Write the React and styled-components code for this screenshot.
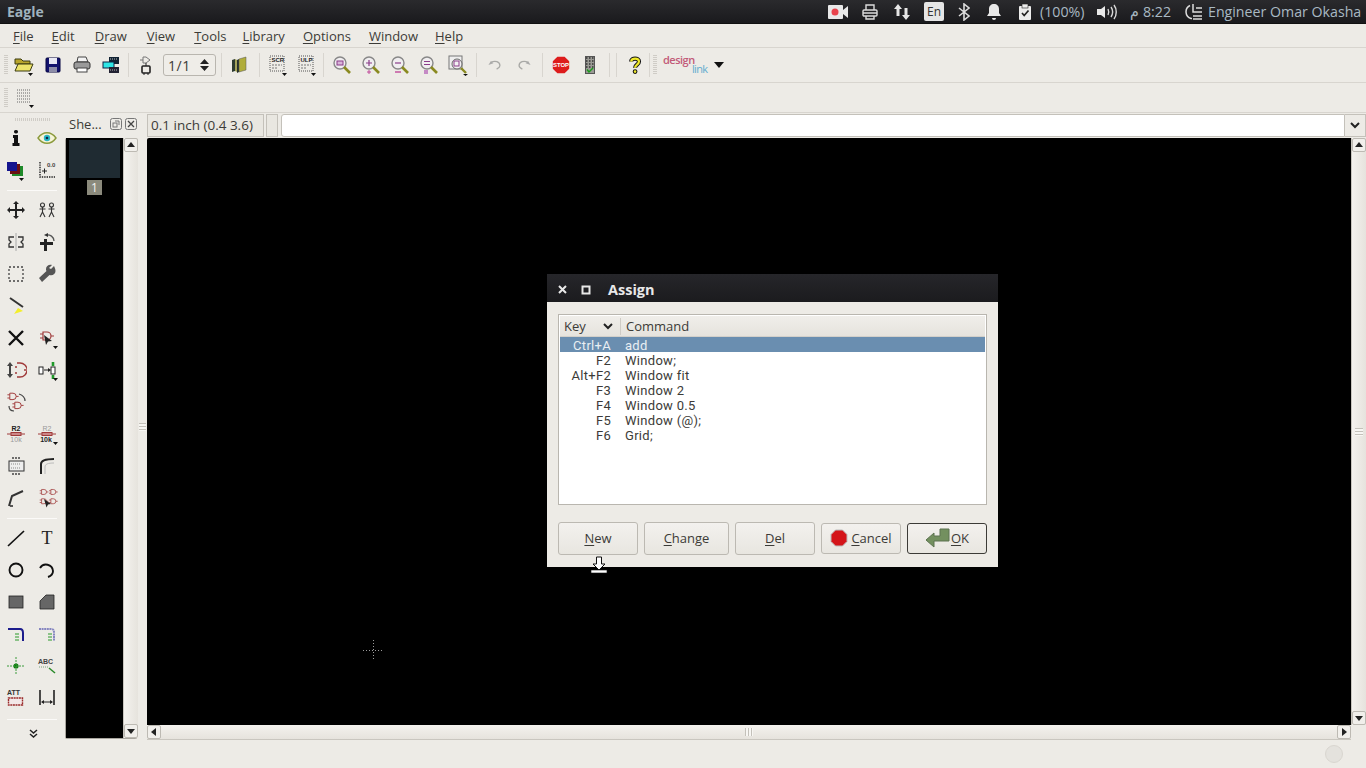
import React from "react";
import styled, { createGlobalStyle } from "styled-components";

const Global = createGlobalStyle`
  html, body { margin: 0; padding: 0; background: #edebe6; }
  body { font-family: "Open Sans", "Noto Sans", "DejaVu Sans", sans-serif; color: #3c3b37; }
`;

const Screen = styled.div`
  position: relative;
  width: 1366px;
  height: 768px;
  overflow: hidden;
  display: flex;
  flex-direction: column;
  background: #edebe6;
  font-size: 13px;
`;

/* top panel */
const Panel = styled.div`
  height: 24px;
  flex: none;
  display: flex;
  align-items: center;
  background: linear-gradient(#2a2a2d, #1a1a1d);
  border-bottom: 1px solid #111;
  box-sizing: border-box;
  padding-left: 7px;
`;
const AppName = styled.div`
  color: #9fb2bd;
  font-size: 14px;
  font-weight: 700;
  flex: 1;
`;
const Tray = styled.div`
  display: flex;
  align-items: center;
  justify-content: center;
  width: ${(p) => p.$w}px;
  flex: none;
  height: 24px;
`;
const TrayText = styled.span`
  color: #a9b9c3;
  font-size: 14.2px;
  white-space: nowrap;
  margin-left: ${(p) => p.$ml || 0}px;
  width: ${(p) => p.$w}px;
  flex: none;
`;
const LangBox = styled.div`
  width: 20px;
  height: 19px;
  background: #e6e6e6;
  border-radius: 2px;
  color: #333;
  font-size: 12px;
  display: flex;
  align-items: center;
  justify-content: center;
`;

/* menu */
const MenuBar = styled.div`
  height: 23px;
  flex: none;
  display: flex;
  align-items: center;
  padding-left: 13px;
  border-bottom: 1px solid #d8d5cf;
`;
const MenuItem = styled.div`
  margin-right: ${(p) => p.$gap}px;
  font-size: 13px;
  color: #3c3b37;
  span { text-decoration: underline; text-underline-offset: 2px; }
`;

/* toolbars */
const ToolRow = styled.div`
  height: ${(p) => p.$h}px;
  flex: none;
  box-sizing: border-box;
  display: flex;
  align-items: center;
  padding-left: 4px;
  border-bottom: 1px solid #d8d5cf;
`;
const Grip = styled.div`
  width: 4px;
  height: 20px;
  flex: none;
  margin-right: ${(p) => p.$mr || 0}px;
  background: repeating-linear-gradient(#cfccc6 0 1px, transparent 1px 2px);
`;
const ToolSlot = styled.div`
  width: ${(p) => p.$w || 29}px;
  height: 28px;
  flex: none;
  display: flex;
  align-items: center;
  justify-content: center;
`;
const Sep = styled.div`
  width: 1px;
  height: 24px;
  flex: none;
  background: #d8d5cf;
  margin: 0 ${(p) => p.$mr ?? 3}px 0 ${(p) => p.$ml ?? 3}px;
`;
const Spin = styled.div`
  width: 53px;
  height: 22px;
  box-sizing: border-box;
  flex: none;
  border: 1px solid #b9b6af;
  border-radius: 3px;
  display: flex;
  align-items: center;
  justify-content: space-between;
  padding: 0 6px 0 4px;
  font-size: 14px;
  letter-spacing: 0.6px;
  background: #efede8;
`;
const BrandWord = styled.div`
  width: 41px;
  height: 22px;
  flex: none;
  margin-left: 6px;
  margin-top: 1px;
  display: flex;
  flex-direction: column;
  font-size: 11px;
  line-height: 10px;
  letter-spacing: -0.5px;
  font-weight: 600;
  color: #c25a78;
  span { display: block; }
  span + span { color: #63abcf; margin: -1px 0 0 29px; font-weight: 400; letter-spacing: -0.7px; }
`;

/* main area */
const Main = styled.div`
  flex: 1;
  min-height: 0;
  display: flex;
`;
const ToolDock = styled.div`
  width: 64px;
  flex: none;
  box-sizing: border-box;
  padding-top: 3px;
  display: flex;
  flex-direction: column;
`;
const DockGrip = styled.div`
  height: 3px;
  width: 36px;
  margin: 2px 0 1px 15px;
  background: repeating-linear-gradient(90deg, #cfccc6 0 1px, transparent 1px 2px);
`;
const ToolGrid = styled.div`
  display: grid;
  grid-template-columns: 31px 31px;
  grid-auto-rows: 32px;
`;
const ToolCell = styled.div`
  display: flex;
  align-items: center;
  justify-content: center;
`;
const DockLine = styled.div`
  height: 1px;
  margin: ${(p) => p.$mt}px 7px ${(p) => p.$mb}px;
  background: #fbfaf8;
`;
const More = styled.div`
  display: flex;
  justify-content: center;
  padding: 9px 0 0 2px;
`;
const SheetDock = styled.div`
  width: 75px;
  flex: none;
  display: flex;
  flex-direction: column;
`;
const SheetHead = styled.div`
  height: 25px;
  flex: none;
  box-sizing: border-box;
  display: flex;
  align-items: center;
  padding: 0 0 3px 5px;
  font-size: 13px;
  gap: 3px;
  span { flex: 1; }
`;
const SheetBody = styled.div`
  flex: 1;
  min-height: 0;
  display: flex;
  margin: 0 2px 1px 1px;
  border: 1px solid #a9a69f;
  border-top: none;
  border-radius: 2px;
`;
const SheetList = styled.div`
  flex: 1;
  background: #000;
  padding: 2px 3px;
  display: flex;
  flex-direction: column;
  align-items: center;
`;
const Thumb = styled.div`
  width: 51px;
  height: 38px;
  background: #1f2b32;
`;
const ThumbNo = styled.div`
  margin-top: 2px;
  width: 15px;
  height: 15px;
  background: #8b8a7c;
  color: #f2f2f2;
  font-size: 12px;
  line-height: 15px;
  text-align: center;
`;
const VBar = styled.div`
  width: 14px;
  flex: none;
  display: flex;
  flex-direction: column;
  background: linear-gradient(90deg, #f4f2ee, #e6e3dd);
  border-left: 1px solid #c9c6bf;
`;
const BarEnd = styled.div`
  height: 14px;
  width: ${(p) => (p.$side ? "14px" : "auto")};
  flex: none;
  display: flex;
  align-items: center;
  justify-content: center;
  background: #f1efeb;
  border: 1px solid #bdbab3;
  box-sizing: border-box;
  border-radius: 2px;
`;
const BarTrack = styled.div`
  flex: 1;
  display: flex;
  align-items: center;
  justify-content: center;
`;
const GripMarks = styled.div`
  width: 8px;
  height: 8px;
  background: repeating-linear-gradient(${(p) => (p.$flat ? "90deg," : "")} #c4c1ba 0 1px, #f7f6f3 1px 3px);
`;
const Splitter = styled.div`
  width: 7px;
  flex: none;
  display: flex;
  align-items: center;
  justify-content: center;
`;
const Work = styled.div`
  flex: 1;
  min-width: 0;
  display: flex;
  flex-direction: column;
`;
const CoordRow = styled.div`
  height: 25px;
  flex: none;
  display: flex;
  align-items: center;
  padding-left: 1px;
`;
const CoordBox = styled.div`
  box-sizing: border-box;
  height: 23px;
  flex: none;
  width: ${(p) => p.$w}px;
  margin-right: ${(p) => p.$mr}px;
  border: 1px solid #c4c1ba;
  background: #e9e7e1;
  padding-left: 3px;
  line-height: 21px;
  font-size: 13.5px;
  color: #3c3b37;
  white-space: nowrap;
`;
const CmdInput = styled.div`
  flex: 1;
  height: 23px;
  box-sizing: border-box;
  background: #fff;
  border: 1px solid #c4c1ba;
  border-radius: 3px 0 0 3px;
`;
const CmdArrow = styled.div`
  width: 21px;
  height: 23px;
  flex: none;
  box-sizing: border-box;
  border: 1px solid #c4c1ba;
  border-left: none;
  display: flex;
  align-items: center;
  justify-content: center;
`;
const CanvasRow = styled.div`
  flex: 1;
  min-height: 0;
  display: flex;
  padding-left: 1px;
`;
const Canvas = styled.div`
  flex: 1;
  position: relative;
  background: #000;
  border-radius: 2px 0 0 0;
`;
const HRow = styled.div`
  height: 15px;
  flex: none;
  display: flex;
  padding: 0 15px 0 1px;
`;
const HBar = styled.div`
  flex: 1;
  display: flex;
  background: linear-gradient(#f4f2ee, #e6e3dd);
  border-bottom: 1px solid #c9c6bf;
`;
const CrossH = styled.div`
  position: absolute;
  left: 216px;
  top: 512px;
  width: 20px;
  height: 1px;
  background: repeating-linear-gradient(90deg, #9b9b9b 0 1px, transparent 1px 3px);
`;
const CrossV = styled.div`
  position: absolute;
  left: 226px;
  top: 502px;
  width: 1px;
  height: 20px;
  background: repeating-linear-gradient(#9b9b9b 0 1px, transparent 1px 3px);
`;
const StatusBar = styled.div`
  height: 28px;
  flex: none;
  display: flex;
  align-items: center;
  justify-content: flex-end;
  padding-right: 23px;
`;
const Busy = styled.div`
  width: 16px;
  height: 16px;
  border-radius: 50%;
  background: #e4e2dd;
  border: 1px solid #d9d6d0;
`;

/* dialog */
const Dialog = styled.div`
  position: absolute;
  left: 547px;
  top: 274px;
  width: 451px;
  height: 293px;
  background: #edebe6;
  display: flex;
  flex-direction: column;
  box-sizing: border-box;
`;
const DialogBar = styled.div`
  height: 28px;
  flex: none;
  box-sizing: border-box;
  display: flex;
  align-items: center;
  background: linear-gradient(#26262a, #1b1b1e);
  color: #e8e8e8;
  font-weight: 700;
  font-size: 14.5px;
  padding: 3px 0 0 10px;
  gap: 13px;
`;
const DialogTitle = styled.span`
  margin-left: 4px;
`;
const DialogBody = styled.div`
  flex: 1;
  display: flex;
  flex-direction: column;
  padding: 12px 11px 12px 11px;
`;
const ListBox = styled.div`
  width: 429px;
  height: 191px;
  flex: none;
  box-sizing: border-box;
  border: 1px solid #b9b6af;
  background: #fff;
  padding: 1px;
`;
const ListHead = styled.div`
  height: 21px;
  box-sizing: border-box;
  display: flex;
  align-items: center;
  background: linear-gradient(#f0eeea, #e6e3dd);
  border-bottom: 1px solid #d3d0ca;
  font-size: 13px;
`;
const HeadKey = styled.div`
  width: 61px;
  box-sizing: border-box;
  padding: 0 7px 0 4px;
  display: flex;
  align-items: center;
  justify-content: space-between;
  border-right: 1px solid #cfccc6;
  height: 17px;
`;
const HeadCmd = styled.div`
  padding-left: 5px;
`;
const Row = styled.div`
  height: 15px;
  box-sizing: border-box;
  padding-top: 2px;
  display: flex;
  align-items: center;
  font-family: Roboto, "Open Sans", sans-serif;
  font-size: 13px;
  letter-spacing: 0.3px;
  line-height: 13px;
  background: ${(p) => (p.$sel ? "#6a8eb0" : "transparent")};
  color: ${(p) => (p.$sel ? "#e9eef3" : "#3c3b37")};
`;
const RowKey = styled.div`
  width: 51px;
  text-align: right;
  white-space: nowrap;
`;
const RowCmd = styled.div`
  margin-left: 14px;
`;
const Buttons = styled.div`
  display: flex;
  align-items: center;
  gap: 6px;
  margin-top: 17px;
`;
const Btn = styled.div`
  width: ${(p) => p.$w}px;
  height: ${(p) => (p.$low ? 31 : 33)}px;
  flex: none;
  box-sizing: border-box;
  display: flex;
  align-items: center;
  justify-content: center;
  gap: ${(p) => (p.$def ? 0 : 3)}px;
  padding-bottom: 2px;
  font-size: 13px;
  color: #3c3b37;
  border: 1px solid ${(p) => (p.$def ? "#3c3b37" : "#bcb9b2")};
  border-radius: 3px;
  background: linear-gradient(#f3f1ee, #e8e6e0);
  span { text-decoration: underline; text-underline-offset: 2px; }
`;
const CursorMark = styled.svg`
  position: absolute;
  left: 590px;
  top: 556px;
`;

const I = ({ s = 22, children, vb = 22 }) => (
  <svg width={s} height={s} viewBox={`0 0 ${vb} ${vb}`} aria-hidden="true">{children}</svg>
);
const Drop = ({ x = 16, y = 19 }) => <path d={`M${x} ${y}h5l-2.5 3z`} fill="#111" />;
const Gate = ({ x = 0, y = 0, c = "#a03a3a" }) => (
  <path transform={`translate(${x} ${y})`} d="M6 4h4a4 4 0 0 1 0 8H6zM3 6h3M3 10h3M14 8h3" fill="none" stroke={c} strokeWidth="1.2" />
);

const icons = {
  open: (
    <I><path d="M2 5h6l2 2h7v3H2z" fill="#b8a52c" stroke="#3a3a10" /><path d="M2 17l3-7h15l-3 7z" fill="#ece36a" stroke="#3a3a10" /><Drop x="15" y="19" /></I>
  ),
  save: (
    <I><rect x="4" y="4" width="14" height="14" rx="1" fill="#12126e" stroke="#050540" /><rect x="7" y="4" width="8" height="6" fill="#e8e8f4" /><rect x="7" y="13" width="8" height="5" fill="#8d8da8" /></I>
  ),
  print: (
    <I><path d="M7 3h8l2 5H6z" fill="#f3f3f3" stroke="#444" /><rect x="3" y="8" width="16" height="7" rx="2" fill="#9a9a9a" stroke="#333" /><rect x="6" y="14" width="10" height="4" fill="#fff" stroke="#444" /></I>
  ),
  net: (
    <I><rect x="9" y="3" width="10" height="7" fill="#123" /><rect x="3" y="8" width="11" height="6" fill="#2ee6e6" stroke="#124" /><rect x="9" y="13" width="10" height="6" fill="#223" /><path d="M10 5h8M10 16h8" stroke="#bbb" strokeDasharray="1 1" /></I>
  ),
  part: (
    <I s={22}><path d="M8 3h3l4 3-4 3H8zM5 6h3" fill="none" stroke="#777" /><rect x="7" y="12" width="8" height="7" rx="1" fill="none" stroke="#222" strokeWidth="1.6" /><path d="M11 9v3M9 19v2M13 19v2" stroke="#222" /></I>
  ),
  book: (
    <I><path d="M4 6l3-1v12l-3 1z" fill="#2c3a30" /><path d="M7 5l2 1v12l-2-1z" fill="#a3a25a" /><path d="M9 6l2-1v13l-2 1z" fill="#26302a" /><path d="M11 5l7-2v13l-7 2z" fill="#b0ad3a" stroke="#555" strokeWidth=".5" /></I>
  ),
  scr: (
    <I><path d="M3 2h14v15H3z" fill="none" stroke="#555" strokeDasharray="1 1" /><text x="4.5" y="8" fontSize="6" fontWeight="700" fill="#222" fontFamily="Liberation Sans">SCR</text><path d="M5 11h10M5 14h6" stroke="#777" strokeDasharray="2 1" /><Drop x="15" y="19" /></I>
  ),
  ulp: (
    <I><path d="M3 2h14v15H3z" fill="none" stroke="#555" strokeDasharray="1 1" /><text x="4.5" y="8" fontSize="6" fontWeight="700" fill="#222" fontFamily="Liberation Sans">ULP</text><path d="M5 11h10M5 14h6" stroke="#777" strokeDasharray="2 1" /><Drop x="15" y="19" /></I>
  ),
  zoomFit: (
    <I><circle cx="9" cy="9" r="6" fill="#f0eef0" stroke="#888" strokeWidth="1.4" /><rect x="6" y="7" width="6" height="4" fill="#d9b5d9" stroke="#8a3d8a" /><path d="M13 13l6 6" stroke="#8a8a20" strokeWidth="2.6" /></I>
  ),
  zoomIn: (
    <I><circle cx="9" cy="9" r="6" fill="#f0eef0" stroke="#888" strokeWidth="1.4" /><path d="M6 9h6M9 6v6" stroke="#8a3d8a" strokeWidth="1.2" /><path d="M13 13l6 6" stroke="#8a8a20" strokeWidth="2.6" /><path d="M7 18h4M9 16v4" stroke="#c04a9a" /></I>
  ),
  zoomOut: (
    <I><circle cx="9" cy="9" r="6" fill="#f0eef0" stroke="#888" strokeWidth="1.4" /><path d="M6 9h6" stroke="#8a3d8a" strokeWidth="1.2" /><path d="M13 13l6 6" stroke="#8a8a20" strokeWidth="2.6" /><path d="M6 18h6" stroke="#c04a9a" strokeWidth="1.4" /></I>
  ),
  zoomSel: (
    <I><circle cx="9" cy="9" r="6" fill="#f0eef0" stroke="#888" strokeWidth="1.4" /><path d="M6 7.5h6M6 10.5h6" stroke="#8a3d8a" strokeWidth="1.2" /><path d="M13 13l6 6" stroke="#8a8a20" strokeWidth="2.6" /><rect x="6" y="16" width="4" height="4" fill="#c58ac5" /></I>
  ),
  zoomRect: (
    <I><rect x="2" y="2" width="13" height="13" fill="#eee" stroke="#777" /><circle cx="10" cy="10" r="5" fill="#f3f0f3" stroke="#666" /><rect x="7" y="7" width="5" height="5" fill="none" stroke="#8a3d8a" /><path d="M14 14l5 5" stroke="#8a8a20" strokeWidth="2.4" /><path d="M16 20h5l-2.500 2z" fill="#111" /></I>
  ),
  undo: (
    <I s={18}><path d="M3 11l3-5 3 3" fill="#aaa" /><path d="M6 8c5-3 11-1 11 4 0 2-2 3-4 4" fill="none" stroke="#a9a9a6" strokeWidth="1.6" /></I>
  ),
  redo: (
    <I s={18}><path d="M19 11l-3-5-3 3" fill="#aaa" /><path d="M16 8C11 5 5 7 5 12c0 2 2 3 4 4" fill="none" stroke="#a9a9a6" strokeWidth="1.6" /></I>
  ),
  stop: (
    <I s={20}><path d="M7 2h8l5 5v8l-5 5H7l-5-5V7z" fill="#dd1c1c" /><text x="11" y="13.5" textAnchor="middle" fontSize="6.6" fontWeight="700" fill="#fff" fontFamily="Liberation Sans">STOP</text></I>
  ),
  drc: (
    <I><rect x="6.500" y="2.500" width="9" height="17" fill="#9a9a94" stroke="#555" /><path d="M7 4h8M7 7h8M7 10h8M7 13h8" stroke="#333" strokeWidth="1.4" strokeDasharray="1.500 1.500" /><path d="M8 15.500l2 2.500 4-4" fill="none" stroke="#1a9b1a" strokeWidth="1.5" /></I>
  ),
  help: (
    <I><g transform="translate(2.500 2) scale(.78)"><path d="M6 7c0-5 10-5 10 0 0 4-5 4-5 8" fill="none" stroke="#111" strokeWidth="5.400" /><path d="M6 7c0-5 10-5 10 0 0 4-5 4-5 8" fill="none" stroke="#f0ea2a" strokeWidth="2.800" /><circle cx="11" cy="20" r="2.400" fill="#f0ea2a" stroke="#111" strokeWidth="1.300" /></g></I>
  ),
  grid: (
    <I><path d="M3 3h14M3 6h14M3 9h14M3 12h14M3 15h14" stroke="#666" strokeDasharray="1 1" /><Drop x="15" y="18" /></I>
  ),
  info: (
    <I><rect x="9" y="3" width="4" height="3.400" rx="1.600" fill="#111" /><path d="M8 8h5v8h1.500v3h-7v-3H9v-5H8z" fill="#111" /></I>
  ),
  eye: (
    <I><path d="M2 11c5-7 13-7 18 0-5 7-13 7-18 0z" fill="#f6f4d8" stroke="#8b9a3c" strokeWidth="1.400" /><circle cx="11" cy="11" r="3.200" fill="#27b6c4" /><circle cx="11" cy="11" r="1.300" fill="#124" /></I>
  ),
  layers: (
    <I><rect x="7" y="7" width="11" height="10" fill="#1f8a2a" /><rect x="5" y="5" width="10" height="10" fill="#6a0f12" /><rect x="2" y="3" width="10" height="9" fill="#14148e" /><Drop x="14" y="19" /></I>
  ),
  mark: (
    <I><path d="M4 3v15h15" fill="none" stroke="#222" strokeDasharray="1.400 1" strokeWidth="1.400" /><path d="M6 12h5M8.500 9.500v5" stroke="#222" /><text x="11" y="8" fontSize="6" fontWeight="700" fill="#444" fontFamily="Liberation Sans">0.0</text></I>
  ),
  move: (
    <I><path d="M11 2l3 3h-2v5h5V8l3 3-3 3v-2h-5v5h2l-3 3-3-3h2v-5H5v2l-3-3 3-3v2h5V5H8z" fill="#222" /></I>
  ),
  copy: (
    <I><g fill="none" stroke="#333" strokeWidth="1.100"><circle cx="6.500" cy="6" r="2" /><path d="M6.500 8v5M3.500 10h6M4 18l2.500-5 2.500 5" /><circle cx="15.500" cy="6" r="2" /><path d="M15.500 8v5M12.500 10h6M13 18l2.500-5 2.500 5" /></g></I>
  ),
  mirror: (
    <I><path d="M11 2v18" stroke="#aaa" /><path d="M9 6H4v3l2 2-2 2v3h5M13 6h5v3l-2 2 2 2v3h-5" fill="none" stroke="#333" strokeWidth="1.300" /></I>
  ),
  rotate: (
    <I><path d="M4 11h13v3H4z" fill="#222" /><path d="M8 8h3v12H8z" fill="#222" /><path d="M10 4c4-1 8 2 8 6" fill="none" stroke="#555" strokeWidth="1.300" /><path d="M8 4l4-2v4z" fill="#333" /></I>
  ),
  group: (
    <I><rect x="4" y="4" width="14" height="14" fill="none" stroke="#444" strokeWidth="1.300" strokeDasharray="2 2" /></I>
  ),
  wrench: (
    <I><path d="M18 3l-3 3-2-1 3-3c-3-1-6 1-6 4 0 1 0 1 .5 2L3 15l3 4 7.500-7c3 1 6-1 6-4 0-2-1-4-1.500-5z" fill="#555" /></I>
  ),
  paste: (
    <I><path d="M5 3l13 9" stroke="#333" strokeWidth="2" /><path d="M9 19l4-6 5 3z" fill="#f3ee2c" /></I>
  ),
  del: (
    <I><path d="M4 4l14 14M18 4L4 18" stroke="#111" strokeWidth="2.400" /></I>
  ),
  add: (
    <I><Gate x="1" y="1" /><path d="M8 8l8 6-4 .5L10 18z" fill="#222" /><Drop x="17" y="19" /></I>
  ),
  resize: (
    <I><path d="M5 3l3 4H6v8h2l-3 4-3-4h2V7H2z" fill="#444" /><path d="M12 4h3a4 4 0 0 1 0 14h-3M10 8h2M10 14h2M19 11h2" fill="none" stroke="#a03a3a" strokeWidth="1.300" /></I>
  ),
  swap: (
    <I><rect x="3" y="8" width="4" height="7" fill="#fff" stroke="#222" /><rect x="15" y="8" width="4" height="7" fill="#fff" stroke="#222" /><path d="M17 3v4M17 16v4" stroke="#1f9a2a" strokeWidth="2.600" /><path d="M8 11h5" stroke="#222" /><path d="M15 11l-3-2v4z" fill="#222" /><Drop x="17" y="19" /></I>
  ),
  replace: (
    <I><g transform="translate(0 -1) scale(.8)"><Gate /></g><g transform="translate(5 8) scale(.8)"><Gate /></g><path d="M14 3c3 1 6 3 6 7M4 15c0 3 2 5 5 5" fill="none" stroke="#444" strokeWidth="1.200" /></I>
  ),
  name: (
    <I><text x="11" y="8" textAnchor="middle" fontSize="7" fontWeight="700" fill="#222" fontFamily="Liberation Sans">R2</text><path d="M2 11h18" stroke="#a03a3a" /><rect x="6" y="9.500" width="10" height="3" fill="#c88" stroke="#a03a3a" /><text x="11" y="19" textAnchor="middle" fontSize="7" fill="#999" fontFamily="Liberation Sans">10k</text></I>
  ),
  value: (
    <I><text x="11" y="8" textAnchor="middle" fontSize="7" fill="#999" fontFamily="Liberation Sans">R2</text><path d="M2 11h18" stroke="#a03a3a" /><rect x="6" y="9.500" width="10" height="3" fill="#c88" stroke="#a03a3a" /><text x="10" y="19" textAnchor="middle" fontSize="7" fontWeight="700" fill="#222" fontFamily="Liberation Sans">10k</text><Drop x="17" y="19" /></I>
  ),
  smash: (
    <I><path d="M7 3h8M7 19h8" stroke="#444" strokeWidth="1.400" strokeDasharray="2 1" /><rect x="4" y="6" width="15" height="10" fill="#eee" stroke="#333" /><path d="M6 9h9M6 13h9" stroke="#888" strokeDasharray="1 1" /></I>
  ),
  miter: (
    <I><path d="M5 19V9c0-3 3-5 13-5" fill="none" stroke="#222" strokeWidth="2" /><path d="M9 19v-7c0-3 3-4 9-4" fill="none" stroke="#bbb" /></I>
  ),
  split: (
    <I><path d="M4 19l3-10 11-5" fill="none" stroke="#333" strokeWidth="2" /><path d="M5 19h3" stroke="#333" strokeWidth="1.600" /></I>
  ),
  invoke: (
    <I><g transform="scale(.62)"><Gate x="3" y="0" /><Gate x="3" y="15" /><Gate x="18" y="0" /><Gate x="18" y="15" /></g><path d="M8 12l7 5-3 .5-1.500 3z" fill="#222" /></I>
  ),
  line: <I><path d="M3 19L19 4" stroke="#111" strokeWidth="1.700" /></I>,
  text: <I><text x="11" y="17" textAnchor="middle" fontSize="18" fontFamily="Liberation Serif" fill="#222">T</text></I>,
  circle: <I><circle cx="11" cy="11" r="6.500" fill="none" stroke="#111" strokeWidth="1.900" /></I>,
  arc: <I><path d="M4 9a7 7 0 0 1 13 3c0 3-2 5-5 6" fill="none" stroke="#111" strokeWidth="1.900" /></I>,
  rect: <I><rect x="4" y="5" width="14" height="12" fill="#666" stroke="#222" strokeWidth=".8" /></I>,
  poly: <I><path d="M4 18V10l6-6h8v14z" fill="#666" stroke="#222" strokeWidth=".8" /></I>,
  bus: (
    <I><path d="M3 6h12c3 0 3 2 3 4v8" fill="none" stroke="#1c1c8c" strokeWidth="2" /><path d="M10 11h4M10 14h4M10 17h4" stroke="#2a9a2a" /></I>
  ),
  net2: (
    <I><path d="M3 6h12c3 0 3 2 3 4v8" fill="none" stroke="#8686c0" strokeWidth="2" strokeDasharray="2 .6" /><path d="M12 11h4M12 14h4M12 17h4" stroke="#2a9a2a" /></I>
  ),
  junction: (
    <I><circle cx="11" cy="11" r="2.600" fill="#0a7a0a" /><path d="M2 11h18M11 2v18" stroke="#3a9a3a" strokeDasharray="2 1" /></I>
  ),
  label: (
    <I><text x="2" y="9" fontSize="7" fontWeight="700" fill="#444" fontFamily="Liberation Sans">ABC</text><path d="M3 12h10" stroke="#7aa07a" strokeDasharray="1 1" /><path d="M13 13l6 5" stroke="#2a8a2a" strokeWidth="1.500" /></I>
  ),
  attr: (
    <I><text x="2" y="8" fontSize="7" fontWeight="700" fill="#333" fontFamily="Liberation Sans">ATT</text><rect x="3.500" y="11" width="14" height="7" fill="#f3e8e8" stroke="#9a2a2a" strokeDasharray="2 .6" strokeWidth="1.400" /></I>
  ),
  dim: (
    <I><path d="M4 3v15M18 3v15" stroke="#222" strokeWidth="1.600" /><path d="M6 15h10" stroke="#222" /><path d="M5 15l3-2v4zM17 15l-3-2v4z" fill="#222" /></I>
  ),
};

const tray = {
  cam: (
    <svg width="20" height="16" viewBox="0 0 20 16"><rect x="0" y="1" width="15" height="14" rx="1" fill="#e8e8e8" /><path d="M15 6l5-4v12l-5-4z" fill="#e8e8e8" /><circle cx="7" cy="8" r="3.500" fill="#e8424c" /></svg>
  ),
  printer: (
    <svg width="18" height="18" viewBox="0 0 18 18" fill="none" stroke="#dcdcdc" strokeWidth="1.400"><path d="M5 7V2h8v5" /><rect x="2" y="7" width="14" height="6" rx="1" /><path d="M5 13v3h8v-3M2 10h14" /></svg>
  ),
  arrows: (
    <svg width="16" height="18" viewBox="0 0 16 18" fill="#e6e6e6"><path d="M4 1l4 5H5.500v7h-3V6H0z" /><path d="M12 17l-4-5h2.500V5h3v7H16z" /></svg>
  ),
  bt: (
    <svg width="12" height="18" viewBox="0 0 12 18" fill="none" stroke="#dcdcdc" strokeWidth="1.600"><path d="M1 5l10 8-5 4V1l5 4L1 13" /></svg>
  ),
  bell: (
    <svg width="16" height="18" viewBox="0 0 16 18" fill="#e8e8e8"><path d="M8 1c3 0 5 2 5 5v4l2 3H1l2-3V6c0-3 2-5 5-5z" /><path d="M6 15h4a2 2 0 0 1-4 0z" /></svg>
  ),
  clip: (
    <svg width="14" height="18" viewBox="0 0 14 18"><rect x="1" y="3" width="12" height="14" rx="1" fill="#ececec" /><rect x="4" y="1" width="6" height="4" fill="#ececec" stroke="#222" strokeWidth=".6" /><path d="M4 10l2.200 2.500L10.500 7.500" fill="none" stroke="#222" strokeWidth="1.700" /></svg>
  ),
  sound: (
    <svg width="20" height="16" viewBox="0 0 20 16" fill="none"><path d="M0 5h4l4-3v12l-4-3H0z" fill="#e8e8e8" /><path d="M11 5c1 2 1 4 0 6M14 3c2 3 2 7 0 10M17 1c3 4 3 10 0 14" stroke="#d8d8d8" strokeWidth="1.400" /></svg>
  ),
  power: (
    <svg width="18" height="18" viewBox="0 0 18 18" fill="none" stroke="#dcdcdc" strokeWidth="1.500"><path d="M5 2.500a7 7 0 0 0 1 13h1" /><path d="M8 1v8h3M11 5h6M11 9h6M8 13h9M8 16h9" /></svg>
  ),
};

const Ic = ({ n }) => icons[n];

const menus = [
  ["F", "ile", 18], ["E", "dit", 20], ["D", "raw", 20], ["V", "iew", 19], ["T", "ools", 16],
  ["L", "ibrary", 18], ["O", "ptions", 18], ["W", "indow", 17], ["H", "elp", 0],
];

const keys = [
  ["Ctrl+A", "add"],
  ["F2", "Window;"],
  ["Alt+F2", "Window fit"],
  ["F3", "Window 2"],
  ["F4", "Window 0.5"],
  ["F5", "Window (@);"],
  ["F6", "Grid;"],
];

const Tools = ({ list }) => (
  <ToolGrid>
    {list.map((n, i) => (
      <ToolCell key={i}>{n && <Ic n={n} />}</ToolCell>
    ))}
  </ToolGrid>
);

const Tool = ({ n }) => (
  <ToolSlot>
    <Ic n={n} />
  </ToolSlot>
);

const Tri = ({ d }) => {
  const p = { up: "M1 7l4-5 4 5z", down: "M1 3l4 5 4-5z", left: "M7 1L2 5l5 4z", right: "M3 1l5 4-5 4z" };
  return (
    <svg width="10" height="10" viewBox="0 0 10 10"><path d={p[d]} fill="#222" /></svg>
  );
};

const Chevron = ({ w = 10 }) => (
  <svg width={w} height="7" viewBox="0 0 10 7"><path d="M1 1l4 4 4-4" fill="none" stroke="#222" strokeWidth="2" /></svg>
);

export default function App() {
  return (
    <Screen>
      <Global />
      <Panel>
        <AppName>Eagle</AppName>
        <Tray $w={32}>{tray.cam}</Tray>
        <Tray $w={32}>{tray.printer}</Tray>
        <Tray $w={32}>{tray.arrows}</Tray>
        <Tray $w={32}><LangBox>En</LangBox></Tray>
        <Tray $w={28}>{tray.bt}</Tray>
        <Tray $w={32}>{tray.bell}</Tray>
        <Tray $w={30}>{tray.clip}</Tray>
        <TrayText $w={57}>(100%)</TrayText>
        <Tray $w={20}>{tray.sound}</Tray>
        <TrayText $ml={13} $w={13}>م</TrayText>
        <TrayText $w={37}>8:22</TrayText>
        <Tray $w={28}>{tray.power}</Tray>
        <TrayText $w={158}>Engineer Omar Okasha</TrayText>
      </Panel>

      <MenuBar>
        {menus.map(([u, rest, gap]) => (
          <MenuItem key={u} $gap={gap}><span>{u}</span>{rest}</MenuItem>
        ))}
      </MenuBar>

      <ToolRow $h={35}>
        <Grip $mr={1} />
        <Tool n="open" />
        <Tool n="save" />
        <Tool n="print" />
        <Tool n="net" />
        <Sep />
        <ToolSlot $w={28}><Ic n="part" /></ToolSlot>
        <ToolSlot $w={3} />
        <Spin>1/1<svg width="9" height="14" viewBox="0 0 9 14"><path d="M0 6l4.500-5L9 6zM0 8l4.500 5L9 8z" fill="#222" /></svg></Spin>
        <Sep $ml={5} $mr={2} />
        <Tool n="book" />
        <Sep $ml={6} $mr={3} />
        <Tool n="scr" />
        <Tool n="ulp" />
        <Sep $ml={2} />
        <Tool n="zoomFit" />
        <Tool n="zoomIn" />
        <Tool n="zoomOut" />
        <Tool n="zoomSel" />
        <Tool n="zoomRect" />
        <Sep $ml={4} />
        <Tool n="undo" />
        <Tool n="redo" />
        <Sep $ml={4} />
        <Tool n="stop" />
        <Tool n="drc" />
        <Sep $ml={5} $mr={6} />
        <Sep $ml={0} $mr={3} />
        <Tool n="help" />
        <Sep $ml={0} $mr={3} />
        <Grip />
        <BrandWord><span>design</span><span>link</span></BrandWord>
        <ToolSlot $w={30}><svg width="10" height="6" viewBox="0 0 10 6"><path d="M0 0h10L5 6z" fill="#111" /></svg></ToolSlot>
      </ToolRow>

      <ToolRow $h={30}>
        <Grip $mr={3} />
        <ToolSlot $w={27}><Ic n="grid" /></ToolSlot>
      </ToolRow>

      <Main>
        <ToolDock>
          <DockGrip />
          <Tools list={["info", "eye", "layers", "mark"]} />
          <DockLine $mt={4} $mb={3} />
          <Tools list={[
            "move", "copy", "mirror", "rotate", "group", "wrench", "paste", null,
            "del", "add", "resize", "swap", "replace", null, "name", "value",
            "smash", "miter", "split", "invoke",
          ]} />
          <DockLine $mt={4} $mb={3} />
          <Tools list={["line", "text", "circle", "arc", "rect", "poly", "bus", "net2", "junction", "label", "attr", "dim"]} />
          <DockLine $mt={5} $mb={0} />
          <More>
            <svg width="9" height="10" viewBox="0 0 9 10" fill="none" stroke="#222" strokeWidth="1.500"><path d="M1 1l3.500 3L8 1M1 5l3.500 3L8 5" /></svg>
          </More>
        </ToolDock>

        <SheetDock>
          <SheetHead>
            <span>She...</span>
            <svg width="12" height="12" viewBox="0 0 12 12" fill="none" stroke="#777"><rect x=".5" y=".5" width="11" height="11" rx="2" /><rect x="3" y="5" width="4" height="4" /><path d="M5 3h4v4" /></svg>
            <svg width="12" height="12" viewBox="0 0 12 12" fill="none" stroke="#777" style={{ marginRight: 2 }}><rect x=".5" y=".5" width="11" height="11" rx="2" /><path d="M3 3l6 6M9 3l-6 6" stroke="#444" strokeWidth="1.300" /></svg>
          </SheetHead>
          <SheetBody>
            <SheetList>
              <Thumb />
              <ThumbNo>1</ThumbNo>
            </SheetList>
            <VBar>
              <BarEnd><Tri d="up" /></BarEnd>
              <BarTrack />
              <BarEnd><Tri d="down" /></BarEnd>
            </VBar>
          </SheetBody>
        </SheetDock>

        <Splitter><GripMarks /></Splitter>

        <Work>
          <CoordRow>
            <CoordBox $w={117} $mr={2}>0.1 inch (0.4 3.6)</CoordBox>
            <CoordBox $w={12} $mr={3} />
            <CmdInput />
            <CmdArrow><Chevron /></CmdArrow>
          </CoordRow>
          <CanvasRow>
            <Canvas>
              <CrossH />
              <CrossV />
            </Canvas>
            <VBar>
              <BarEnd><Tri d="up" /></BarEnd>
              <BarTrack><GripMarks /></BarTrack>
              <BarEnd><Tri d="down" /></BarEnd>
            </VBar>
          </CanvasRow>
          <HRow>
            <HBar>
              <BarEnd $side><Tri d="left" /></BarEnd>
              <BarTrack><GripMarks $flat /></BarTrack>
              <BarEnd $side><Tri d="right" /></BarEnd>
            </HBar>
          </HRow>
        </Work>
      </Main>

      <StatusBar><Busy /></StatusBar>

      <Dialog>
        <DialogBar>
          <svg width="11" height="11" viewBox="0 0 11 11"><path d="M2 2l7 7M9 2l-7 7" stroke="#e8e8e8" strokeWidth="2" /></svg>
          <svg width="10" height="10" viewBox="0 0 10 10"><rect x="1.500" y="1.500" width="7" height="7" fill="none" stroke="#e8e8e8" strokeWidth="2" /></svg>
          <DialogTitle>Assign</DialogTitle>
        </DialogBar>
        <DialogBody>
          <ListBox>
            <ListHead>
              <HeadKey>Key<Chevron /></HeadKey>
              <HeadCmd>Command</HeadCmd>
            </ListHead>
            {keys.map(([k, c], i) => (
              <Row key={k} $sel={i === 0}>
                <RowKey>{k}</RowKey>
                <RowCmd>{c}</RowCmd>
              </Row>
            ))}
          </ListBox>
          <Buttons>
            <Btn $w={80}><div><span>N</span>ew</div></Btn>
            <Btn $w={85}><div><span>C</span>hange</div></Btn>
            <Btn $w={80}><div><span>D</span>el</div></Btn>
            <Btn $w={80} $low>
              <svg width="18" height="18" viewBox="0 0 18 18"><path d="M5.500 1h7L17 5.500v7L12.500 17h-7L1 12.500v-7z" fill="#d41419" stroke="#bbb" /></svg>
              <div><span>C</span>ancel</div>
            </Btn>
            <Btn $w={80} $low $def>
              <svg width="26" height="24" viewBox="0 0 26 24"><path d="M1 14l8-7v3h6V3h9v12H9v6z" fill="#73905f" stroke="#5c7350" /></svg>
              <div><span>O</span>K</div>
            </Btn>
          </Buttons>
        </DialogBody>
      </Dialog>

      <CursorMark width="18" height="18" viewBox="0 0 18 18">
        <path d="M6.500 1h5v7h3.500L9 14 3 8h3.500z" fill="#fff" stroke="#111" />
        <rect x="1" y="14" width="16" height="3" fill="#fff" stroke="#111" strokeWidth=".6" />
      </CursorMark>
    </Screen>
  );
}
